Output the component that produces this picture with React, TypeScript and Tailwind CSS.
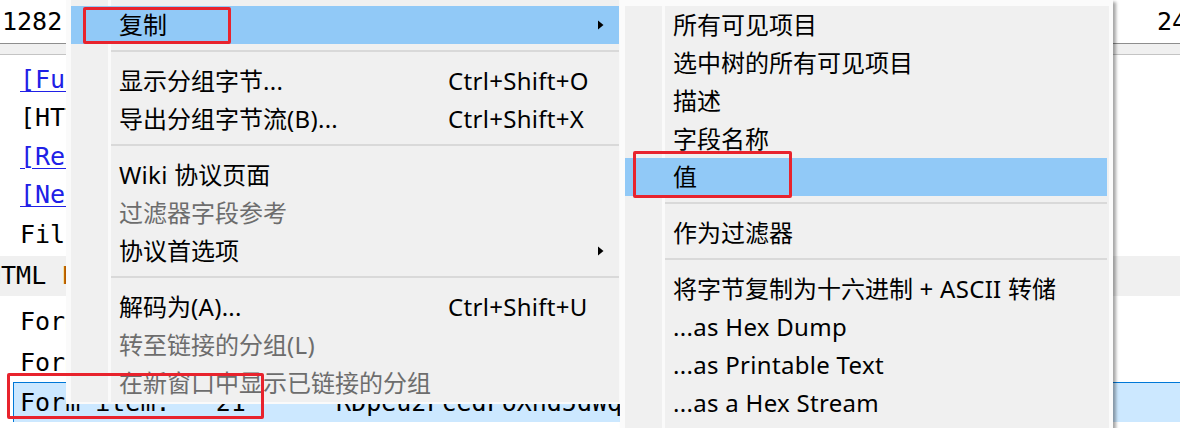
import { ReactNode } from "react";

const mono = "font-['DejaVu_Sans_Mono',monospace] text-[25px] text-black whitespace-pre";
const ui = "font-['Noto_Sans','Noto_Sans_CJK_SC',sans-serif] text-[24px]";

// Latin runs get a little tracking so they match the YaHei/Segoe widths
function Mixed({ text }: { text: string }) {
  const parts = text.match(/[\x20-\x7e]+|[^\x20-\x7e]+/g) ?? [];
  return (
    <>
      {parts.map((p, i) =>
        /^[\x20-\x7e]+$/.test(p) ? (
          <span key={i} className="tracking-[0.3px]">
            {p}
          </span>
        ) : (
          <span key={i}>{p}</span>
        )
      )}
    </>
  );
}

type ItemProps = {
  label: string;
  shortcut?: string;
  disabled?: boolean;
  arrow?: boolean;
  active?: boolean;
};

function Arrow() {
  return (
    <svg width="6" height="10" viewBox="0 0 6 10" className="shrink-0">
      <path d="M0 0.5 L5.5 5 L0 9.5 Z" fill="#000" />
    </svg>
  );
}

function Item({ label, shortcut, disabled, arrow, active }: ItemProps) {
  return (
    <div
      className={`flex h-[38px] items-center pl-[48px] ${active ? "bg-[#91c9f7]" : ""} ${
        disabled ? "text-[#6d6d6d]" : "text-black"
      }`}
    >
      <span className="w-[329px] shrink-0 whitespace-pre">
        <Mixed text={label} />
      </span>
      {shortcut && (
        <span className="whitespace-nowrap">
          <Mixed text={shortcut} />
        </span>
      )}
      {arrow && (
        <span className="ml-auto mr-[15px] flex">
          <Arrow />
        </span>
      )}
    </div>
  );
}

function Sep() {
  return (
    <div className="h-[18px] pl-[40px] pt-[6px]">
      <div className="h-[2px] bg-[#d9d9d9]" />
    </div>
  );
}

function Row({ h, children, className = "" }: { h: string; children: ReactNode; className?: string }) {
  return <div className={`flex shrink-0 items-center ${h} ${className}`}>{children}</div>;
}

function Link({ children }: { children: ReactNode }) {
  return <span className="text-[#2020e6] underline decoration-1 underline-offset-[3px]">{children}</span>;
}

function RedBox({ className }: { className: string }) {
  return <div className={`pointer-events-none absolute rounded-[2px] border-[3px] border-[#e8232d] ${className}`} />;
}

export default function App() {
  return (
    <div className="relative h-[428px] w-[1180px] overflow-hidden bg-white">
      {/* packet details pane behind the menus */}
      <div className={`flex h-full flex-col ${mono}`}>
        <Row h="h-[43px]">
          <span className="w-[1157px] shrink-0 pl-[2px]">1282</span>
          <span>24</span>
        </Row>
        <div className="h-px bg-[#8e8e8e]" />
        <div className="h-[10px] bg-[#f0f0f0]" />
        <div className="h-px bg-[#c4c4c4]" />
        <div className="h-[6px]" />
        <Row h="h-[38px]" className="pl-[20px]">
          <Link>[Full request URI: http://192.168.1.10/login.php]</Link>
        </Row>
        <Row h="h-[38px]" className="pl-[20px]">
          [HTTP request 1/1]
        </Row>
        <Row h="h-[39px]" className="pl-[20px]">
          <Link>[Response in frame: 1284]</Link>
        </Row>
        <Row h="h-[38px]" className="pl-[20px]">
          <Link>[Next request in frame: 1290]</Link>
        </Row>
        <Row h="h-[42px]" className="pl-[20px]">
          File Data: 58 bytes
        </Row>
        <Row h="h-[40px]" className="bg-[#f0f0f0] pl-0">
          <span className="-ml-[14px]">
            HTML <span className="text-[#b35c00]">Form URL Encoded: application/x-www-form-urlencoded</span>
          </span>
        </Row>
        <Row h="h-[47px]" className="pl-[20px] pt-[5px]">
          Form item: "username" = "admin"
        </Row>
        <Row h="h-[39px]" className="pl-[20px]">
          {'Form item: "passwd" = "QmFzZTY0IGVuY29kZWQgcGFzc3dvcmQgaGVy  zZXRf'}
        </Row>
        <Row
          h="h-[40px]"
          className="ml-[13px] border-l border-t border-[#0078d7] bg-[#cce8ff] pl-[6px]"
        >
          {"Form item:   21      RDpeu2FcedFoXhd5dWq8sKLmN3vBxYt"}
        </Row>
      </div>

      {/* main context menu */}
      <div className={`absolute left-[66px] top-[-2px] w-[558px] bg-[#fafafa] pb-[2px] pl-[5px] pr-[5px] pt-[2px] ${ui}`}>
        <div className="bg-[linear-gradient(to_right,#f0f0f0_37px,#fafafa_37px,#fafafa_40px,#f0f0f0_40px)] pt-[6px]">
          <Item label="复制" arrow active />
          <Sep />
          <Item label="显示分组字节..." shortcut="Ctrl+Shift+O" />
          <Item label="导出分组字节流(B)..." shortcut="Ctrl+Shift+X" />
          <Sep />
          <Item label="Wiki 协议页面" />
          <Item label="过滤器字段参考" disabled />
          <Item label="协议首选项" arrow />
          <Sep />
          <Item label="解码为(A)..." shortcut="Ctrl+Shift+U" />
          <Item label="转至链接的分组(L)" disabled />
          <Item label="在新窗口中显示已链接的分组" disabled />
        </div>
      </div>

      {/* copy submenu */}
      <div
        className={`absolute left-[620px] top-0 w-[493px] bg-[#fbfbfb] pl-[5px] pr-[4px] pt-[6px] shadow-[3px_2px_3px_rgba(0,0,0,0.35)] ${ui}`}
      >
        <div className="bg-[linear-gradient(to_right,#f0f0f0_37px,#fafafa_37px,#fafafa_40px,#f0f0f0_40px)] pb-[12px] pr-[2px]">
          <Item label="所有可见项目" />
          <Item label="选中树的所有可见项目" />
          <Item label="描述" />
          <Item label="字段名称" />
          <Item label="值" active />
          <Sep />
          <Item label="作为过滤器" />
          <Sep />
          <Item label="将字节复制为十六进制 + ASCII 转储" />
          <Item label="...as Hex Dump" />
          <Item label="...as Printable Text" />
          <Item label="...as a Hex Stream" />
        </div>
      </div>

      {/* annotations */}
      <RedBox className="left-[83px] top-[7px] h-[37px] w-[148px]" />
      <RedBox className="left-[633px] top-[151px] h-[47px] w-[159px]" />
      <RedBox className="left-[7px] top-[373px] h-[46px] w-[257px]" />
    </div>
  );
}
